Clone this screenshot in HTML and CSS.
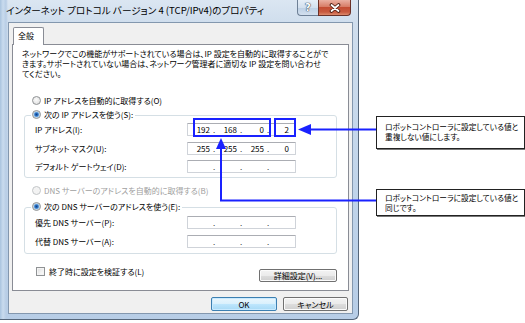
FILE: index.html
```html
<!DOCTYPE html>
<html lang="ja">
<head>
<meta charset="utf-8">
<title>インターネット プロトコル バージョン 4 (TCP/IPv4)のプロパティ</title>
<link rel="stylesheet" href="styles.css">
</head>
<body>
<div class="stage">
  <div class="dialog">
    <div class="titlebar">
      <span class="title">インターネット プロトコル バージョン 4 (TCP/IPv4)のプロパティ</span>
      <div class="caps">
        <span class="cap help">?</span>
        <span class="cap close">
          <svg width="12" height="10" viewBox="0 0 12 10"><path d="M2.5 2L9.5 8M9.5 2L2.5 8" stroke="#4a1c12" stroke-width="3.6" stroke-linecap="round"/><path d="M2.5 2L9.5 8M9.5 2L2.5 8" stroke="#fff" stroke-width="1.8" stroke-linecap="round"/></svg>
        </span>
      </div>
    </div>
    <div class="client">
      <div class="tabs"><span class="tab">全般</span></div>
      <div class="panel">
        <p class="desc"><span class="dl">ネットワークでこの機能がサポートされている場合は、IP 設定を自動的に取得することがで</span><span class="dl">きます。サポートされていない場合は、ネットワーク管理者に適切な IP 設定を問い合わせ</span><span class="dl">てください。</span></p>
        <div class="opt opt-first"><span class="radio"></span><span>IP アドレスを自動的に取得する(O)</span></div>
        <div class="group group-ip">
          <div class="legend"><span class="radio checked"></span><span>次の IP アドレスを使う(S):</span></div>
          <div class="rows">
            <span class="lbl">IP アドレス(I):</span>
            <div class="ip"><span class="seg"><span>192</span><i>.</i></span><span class="seg"><span>168</span><i>.</i></span><span class="seg"><span>0</span><i>.</i></span><span class="seg last"><span>2</span></span></div>
            <span class="lbl">サブネット マスク(U):</span>
            <div class="ip"><span class="seg"><span>255</span><i>.</i></span><span class="seg"><span>255</span><i>.</i></span><span class="seg"><span>255</span><i>.</i></span><span class="seg last"><span>0</span></span></div>
            <span class="lbl">デフォルト ゲートウェイ(D):</span>
            <div class="ip"><span class="seg"><i>.</i></span><span class="seg"><i>.</i></span><span class="seg"><i>.</i></span><span class="seg last"></span></div>
          </div>
        </div>
        <div class="opt opt-dns disabled"><span class="radio off"></span><span>DNS サーバーのアドレスを自動的に取得する(B)</span></div>
        <div class="group group-dns">
          <div class="legend"><span class="radio checked"></span><span>次の DNS サーバーのアドレスを使う(E):</span></div>
          <div class="rows">
            <span class="lbl">優先 DNS サーバー(P):</span>
            <div class="ip"><span class="seg"><i>.</i></span><span class="seg"><i>.</i></span><span class="seg"><i>.</i></span><span class="seg last"></span></div>
            <span class="lbl">代替 DNS サーバー(A):</span>
            <div class="ip"><span class="seg"><i>.</i></span><span class="seg"><i>.</i></span><span class="seg"><i>.</i></span><span class="seg last"></span></div>
          </div>
        </div>
        <div class="checkrow">
          <div class="opt check"><span class="box"></span><span>終了時に設定を検証する(L)</span></div>
          <span class="btn btn-detail">詳細設定(V)...</span>
        </div>
      </div>
      <div class="footer">
        <span class="btn btn-ok">OK</span>
        <span class="btn btn-cancel">キャンセル</span>
      </div>
    </div>
  </div>

  <svg class="marks" width="525" height="323" viewBox="0 0 525 323">
    <rect x="194" y="119" width="76" height="17" fill="none" stroke="#1a22ff" stroke-width="2"/>
    <rect x="275" y="119" width="20" height="17" fill="none" stroke="#1a22ff" stroke-width="2"/>
    <line x1="308" y1="129.5" x2="377" y2="129.5" stroke="#1a22ff" stroke-width="2"/>
    <polygon points="298,129.5 311,124 311,135" fill="#1a22ff"/>
    <polyline points="221,147 221,200.5 377,200.5" fill="none" stroke="#1a22ff" stroke-width="2"/>
    <polygon points="221,138 216,149 226,149" fill="#1a22ff"/>
  </svg>

  <div class="note note-1"><span class="nl">ロボットコントローラに設定している値と</span><span class="nl">重複しない値にします。</span></div>
  <div class="note note-2"><span class="nl">ロボットコントローラに設定している値と</span><span class="nl">同じです。</span></div>
</div>
</body>
</html>
```

FILE: styles.css
```css
* { box-sizing: border-box; margin: 0; padding: 0; }
html, body { width: 525px; height: 323px; overflow: hidden; background: #fff; }
body {
  font-family: "Noto Sans CJK JP", "Noto Sans", sans-serif;
  font-size: 8px;
  color: #000;
  font-feature-settings: "palt" 1;
}
.stage { position: relative; width: 525px; height: 323px; }

/* window */
.dialog {
  width: 359px;
  height: 320px;
  display: flex;
  flex-direction: column;
  padding: 0 5px 5px 8px;
  background:
    linear-gradient(90deg, #a9c3de 0, #c9dbee 3px, #b8cde5 6px, rgba(184,205,229,0) 8px),
    linear-gradient(180deg, #dbe6f2 0, #d0deed 22px, #c0d4ea 60%, #b7cde6 100%);
  border: 1px solid #55667a;
  border-left: 0;
  border-top: 0;
  border-radius: 0 0 6px 0;
}
.titlebar {
  height: 22px;
  display: flex;
  align-items: flex-start;
  margin-left: -2px;
}
.title {
  font-size: 9.6px;
  line-height: 21px;
  white-space: nowrap;
  color: #000;
}
.caps { margin-left: auto; margin-right: 2px; display: flex; }
.cap {
  height: 16px;
  display: flex;
  align-items: center;
  justify-content: center;
}
.help {
  width: 21px;
  border: 1px solid #6e8096;
  border-top: 0;
  border-right: 0;
  border-radius: 0 0 0 4px;
  background: linear-gradient(180deg, #e6eef7 0, #d3e0ee 50%, #bccfe4 51%, #d2dfee 100%);
  color: #fff;
  font-family: "DejaVu Sans", sans-serif;
  font-weight: bold;
  font-size: 10px;
  text-shadow: 0 0 1px #3d4d60, 0 0 1px #3d4d60, 0 0 1px #3d4d60;
}
.close {
  width: 33px;
  border: 1px solid #6a3128;
  border-top: 0;
  border-radius: 0 0 4px 0;
  background: linear-gradient(180deg, #eab0a2 0, #d77c66 45%, #c44d33 50%, #c85a3f 80%, #dd8a6c 100%);
}

.client {
  flex: 1;
  display: flex;
  flex-direction: column;
  background: #f0f0f0;
  border: 1px solid #8397ae;
  padding: 4px 3px 2px 3px;
}
.tabs { display: flex; }
.tab {
  position: relative;
  z-index: 1;
  width: 31px;
  height: 18px;
  margin-left: 1px;
  margin-bottom: -1px;
  padding-left: 4px;
  border: 1px solid #898c95;
  border-bottom: 0;
  border-radius: 2px 2px 0 0;
  background: #fff;
  line-height: 16px;
}
.panel {
  height: 247px;
  display: flex;
  flex-direction: column;
  background: #fff;
  border: 1px solid #898c95;
  padding: 4px 11px 0 9px;
}
.desc { display: flex; flex-direction: column; white-space: nowrap; }
.dl { display: block; height: 10px; line-height: 10px; }

.opt {
  display: flex;
  align-items: center;
  gap: 3px;
  height: 12px;
  white-space: nowrap;
}
.opt-first { margin: 15px 0 0 10px; }
.opt-dns { margin: 6px 0 0 10px; }
.disabled { color: #a0a0a0; }

.radio {
  width: 9px;
  height: 9px;
  border-radius: 50%;
  border: 1px solid #8f9294;
  background: radial-gradient(circle at 45% 40%, #fbfbfb 0, #e4e4e4 70%, #d0d0d0 100%);
}
.radio.checked {
  background: radial-gradient(circle, #0f3f86 0, #2f73c4 1.6px, #8fc1ec 2.6px, #e0e0e0 3.3px, #f5f5f5 100%);
}
.radio.off { border-color: #c3c6c8; background: #f3f3f3; }

.group {
  margin-left: 2px;
  border: 1px solid #d5dfe5;
  border-radius: 3px;
  padding: 0 0 4px 10px;
  display: flex;
  flex-direction: column;
}
.group-ip { margin-top: 9px; }
.group-dns { margin-top: 11px; padding-bottom: 5px; }
.legend {
  align-self: flex-start;
  display: flex;
  align-items: center;
  gap: 3px;
  height: 12px;
  margin: -8px 0 0 -4px;
  padding: 0 2px 0 1px;
  background: #fff;
  white-space: nowrap;
}
.rows {
  display: grid;
  grid-template-columns: 152px 109px;
  row-gap: 5.5px;
  align-items: center;
  margin-top: 3px;
}
.group-dns .rows { margin-top: 4px; }
.lbl { white-space: nowrap; line-height: 13px; }

.ip {
  display: flex;
  height: 13px;
  border: 1px solid #cfd3d9;
  border-top-color: #abadb3;
  border-radius: 1px;
  background: #fff;
  line-height: 11px;
}
.seg {
  width: 27px;
  display: flex;
  justify-content: flex-end;
  align-items: center;
  gap: 3px;
  color: #000;
}
.seg i { font-style: normal; color: #333; width: 2px; }
.seg.last { width: 26px; padding-right: 6px; }

.checkrow {
  display: flex;
  justify-content: space-between;
  align-items: flex-start;
  margin-top: 12px;
}
.check { margin-left: 14px; gap: 4px; }
.box {
  width: 9px;
  height: 9px;
  border: 1px solid #8f9294;
  background: linear-gradient(135deg, #dcdcdc 0, #f2f2f2 60%, #fff 100%);
  box-shadow: inset 0 0 0 1px #f4f4f4;
}

.btn {
  display: flex;
  align-items: center;
  justify-content: center;
  height: 13px;
  border: 1px solid #707070;
  border-radius: 2px;
  background: linear-gradient(180deg, #f3f3f3 0, #ebebeb 50%, #dddddd 51%, #cfcfcf 100%);
  box-shadow: inset 0 0 0 1px #fbfbfb;
  white-space: nowrap;
  font-size: 8px;
}
.btn-detail { width: 78px; margin-top: 3px; }
.footer {
  display: flex;
  justify-content: flex-end;
  gap: 6px;
  margin-top: 6px;
  padding-right: 1px;
}
.btn-ok {
  width: 66px;
  height: 14px;
  border-color: #3c7fb1;
  background: linear-gradient(180deg, #eaf6fd 0, #d9f0fc 50%, #bee6fd 51%, #a7d9f5 100%);
  box-shadow: inset 0 0 0 1px #c9eaff;
}
.btn-cancel { width: 65px; height: 14px; }

/* annotations */
.marks { position: absolute; left: 0; top: 0; pointer-events: none; }
.note {
  position: absolute;
  left: 376px;
  width: 149px;
  display: flex;
  flex-direction: column;
  border: 1px solid #222;
  box-shadow: 1px 1px 0 #777;
  background: #fff;
  font-size: 7.7px;
  padding: 5px 0 0 8px;
  white-space: nowrap;
}
.nl { display: block; height: 10px; line-height: 10px; }
.note-1 { top: 116px; height: 33px; }
.note-2 { top: 189px; height: 27px; padding-top: 3px; }
```
